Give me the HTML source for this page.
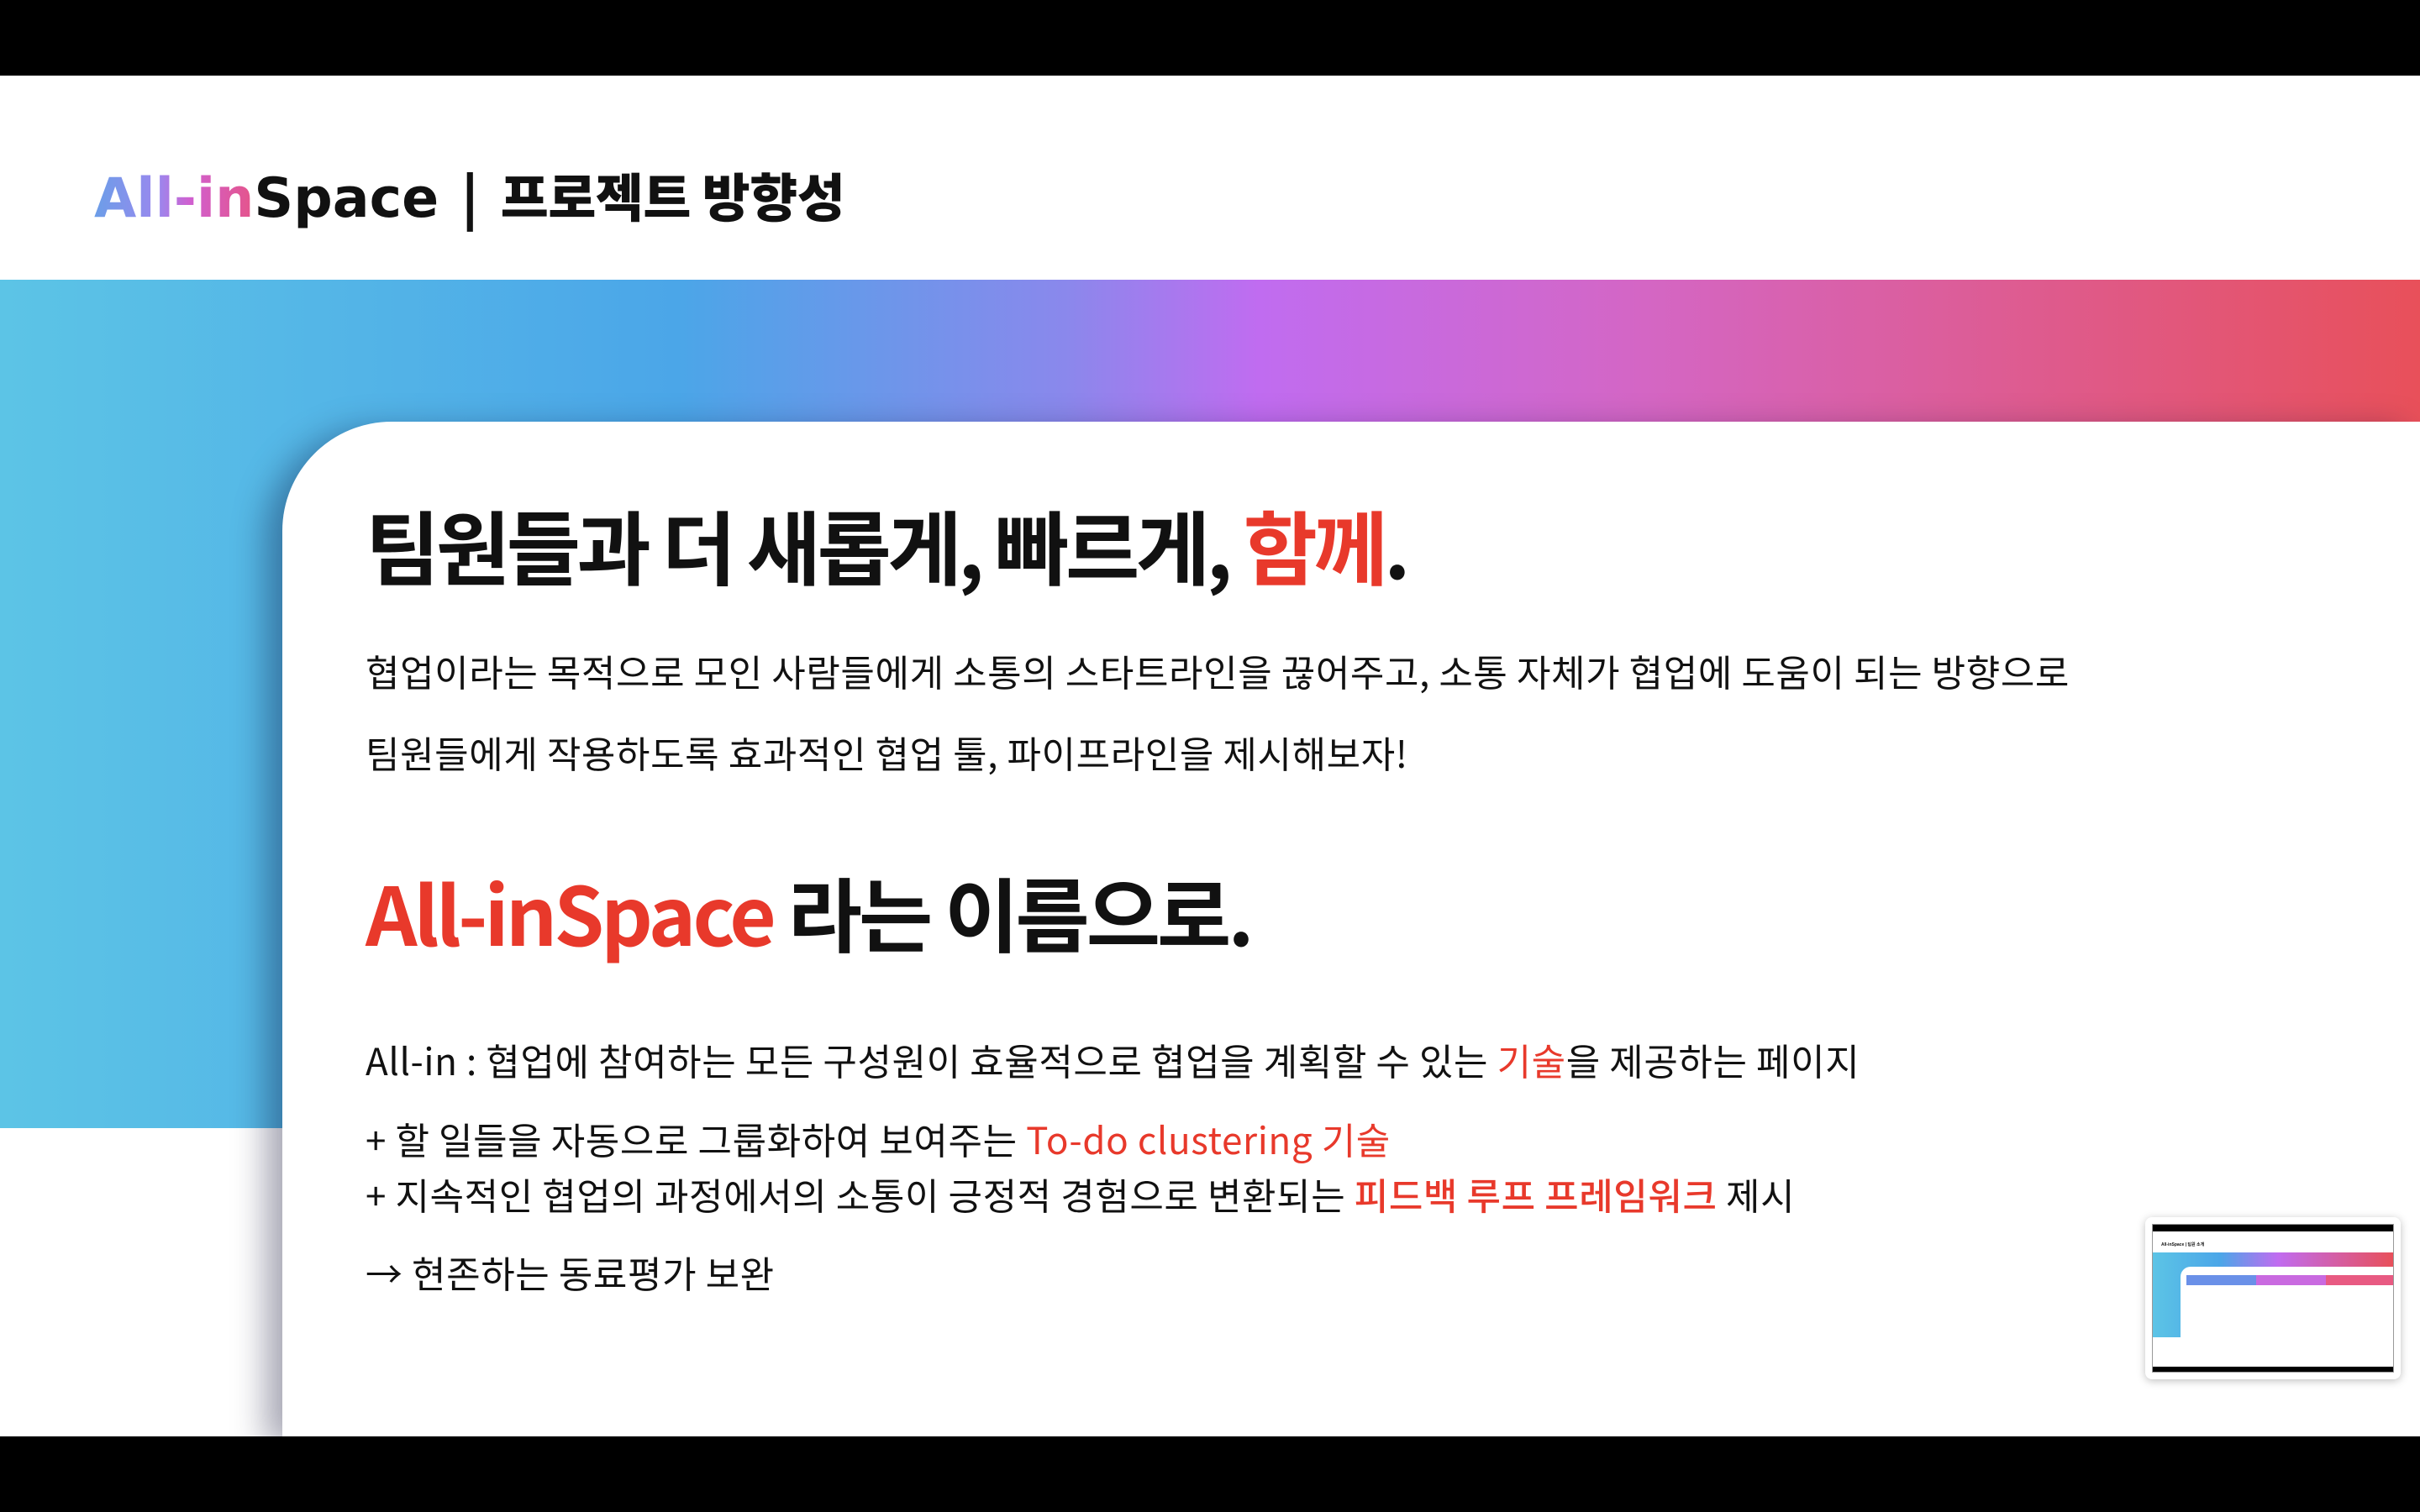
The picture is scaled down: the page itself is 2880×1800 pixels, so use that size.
<!DOCTYPE html>
<html><head><meta charset="utf-8"><style>
*{margin:0;padding:0;box-sizing:border-box}
html,body{width:2880px;height:1800px;overflow:hidden}
body{background:#fff;position:relative;font-family:"Liberation Sans","Noto Sans CJK KR",sans-serif;color:#111}
.bar{position:absolute;left:0;width:2880px;background:#000}
.band{position:absolute;left:0;top:333px;width:2880px;height:1010px;background:linear-gradient(90deg,#5cc4e6 0%,#4ba6e8 28%,#8a88ec 44%,#c06cf0 52%,#d466c4 68%,#e8505a 100%)}
.card{position:absolute;left:336px;top:502px;width:2544px;height:1208px;background:#fff;border-top-left-radius:130px;box-shadow:-20px 10px 40px rgba(0,0,40,.35)}
.t{position:absolute;left:435px;white-space:nowrap;font-family:"Noto Sans CJK KR",sans-serif}
.r{color:#e8392b}
.h{font-size:96px;font-weight:700;letter-spacing:-4.5px;line-height:1}
.p{font-size:44px;font-weight:400;letter-spacing:0.6px;line-height:1}
.hdr{position:absolute;left:112px;top:200px;font-size:65px;font-weight:900;white-space:nowrap;line-height:1}
.logo{font-family:"DejaVu Sans",sans-serif;font-weight:bold;letter-spacing:0}
.grad{background:linear-gradient(90deg,#6b9ee8,#9a88ee 40%,#d060d0 60%,#e5548a);-webkit-background-clip:text;background-clip:text;color:transparent}
.thumb{position:absolute;left:2553px;top:1449px;width:304px;height:193px;background:#fff;border-radius:8px;box-shadow:0 2px 10px rgba(0,0,0,.25);padding:8px}
</style></head><body>
<div class="bar" style="top:0;height:90px"></div>
<div class="hdr"><span class="logo"><span class="grad">All-in</span>Space</span><span style="font-family:'Noto Sans CJK KR',sans-serif;font-size:62px;letter-spacing:-0.5px"> &nbsp;|&nbsp;&nbsp;프로젝트 방향성</span></div>
<div class="band"></div>
<div class="card"></div>
<div class="t h" style="top:600px">팀원들과 더 새롭게, 빠르게, <span class="r">함께</span>.</div>
<div class="t p" style="top:776px">협업이라는 목적으로 모인 사람들에게 소통의 스타트라인을 끊어주고, 소통 자체가 협업에 도움이 되는 방향으로</div>
<div class="t p" style="top:873px">팀원들에게 작용하도록 효과적인 협업 툴, 파이프라인을 제시해보자!</div>
<div class="t h" style="top:1037px;letter-spacing:-4px"><span class="r">All-inSpace</span> 라는 이름으로.</div>
<div class="t p" style="top:1239px">All-in : 협업에 참여하는 모든 구성원이 효율적으로 협업을 계획할 수 있는 <span class="r">기술</span>을 제공하는 페이지</div>
<div class="t p" style="top:1333px">+ 할 일들을 자동으로 그룹화하여 보여주는 <span class="r">To-do clustering 기술</span></div>
<div class="t p" style="top:1399px">+ 지속적인 협업의 과정에서의 소통이 긍정적 경험으로 변환되는 <span class="r" style="font-weight:500">피드백 루프 프레임워크</span> 제시</div>
<div class="t p" style="top:1492px">→ 현존하는 동료평가 보완</div>
<div class="thumb">
 <div style="position:relative;width:288px;height:177px;background:#fff;overflow:hidden;border:1px solid #999">
  <div style="position:absolute;top:0;left:0;width:100%;height:8px;background:#000"></div>
  <div style="position:absolute;top:20px;left:10px;font-size:5px;font-weight:bold">All-inSpace | 팀원 소개</div>
  <div style="position:absolute;top:33px;left:0;width:100%;height:101px;background:linear-gradient(90deg,#5cc4e6,#4ba6e8 28%,#c06cf0 52%,#e8505a)"></div>
  <div style="position:absolute;top:50px;left:33px;width:260px;height:130px;background:#fff;border-top-left-radius:12px"></div>
  <div style="position:absolute;top:60px;left:40px;width:83px;height:12px;background:#6a90e8"></div>
  <div style="position:absolute;top:60px;left:123px;width:83px;height:12px;background:#c96ae0"></div>
  <div style="position:absolute;top:60px;left:206px;width:82px;height:12px;background:#e85a82"></div>
  <div style="position:absolute;top:169px;left:0;width:100%;height:8px;background:#000"></div>
 </div>
</div>
<div class="bar" style="top:1710px;height:90px"></div>
</body></html>
